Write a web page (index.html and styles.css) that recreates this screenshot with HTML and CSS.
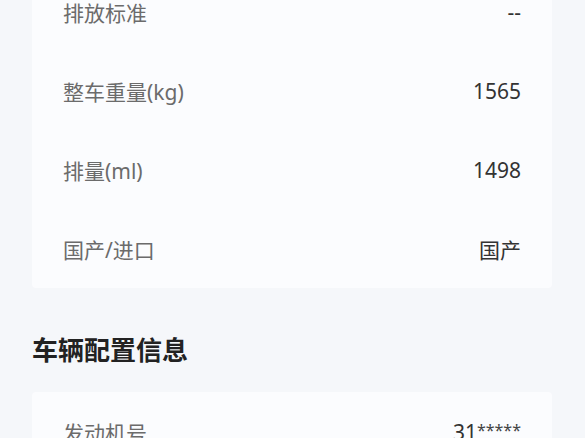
FILE: index.html
```html
<!DOCTYPE html>
<html lang="zh-CN">
<head>
    <meta charset="UTF-8">
    <meta name="viewport" content="width=device-width, initial-scale=1.0">
    <title>车辆信息</title>
    <link rel="stylesheet" href="styles.css">
</head>
<body>
    <div class="page">
        <div class="card card-first">
            <div class="row">
                <span class="label">排放标准</span>
                <span class="value">--</span>
            </div>
            <div class="row">
                <span class="label">整车重量(kg)</span>
                <span class="value">1565</span>
            </div>
            <div class="row">
                <span class="label">排量(ml)</span>
                <span class="value">1498</span>
            </div>
            <div class="row">
                <span class="label">国产/进口</span>
                <span class="value">国产</span>
            </div>
        </div>

        <h2 class="section-title">车辆配置信息</h2>

        <div class="card">
            <div class="row">
                <span class="label">发动机号</span>
                <span class="value">31<span class="mask">*****</span></span>
            </div>
        </div>
    </div>
</body>
</html>
```

FILE: styles.css
```css
body {
    margin: 0;
    background-color: #f5f7fa;
    font-family: "Noto Sans", "Noto Sans CJK SC", sans-serif;
    overflow: hidden;
}

.page {
    padding: 0 33px 0 32px;
}

.card {
    background-color: #fbfcfe;
    border-radius: 4px;
}

.card-first {
    margin-top: -28px;
}

.row {
    display: flex;
    justify-content: space-between;
    align-items: center;
    height: 79px;
    padding: 0 31px;
}

.label {
    font-size: 21px;
    color: #6b6b6b;
}

.value {
    font-size: 21px;
    color: #333;
}

.mask {
    font-size: 16px;
    vertical-align: 4px;
    color: #444;
}

.section-title {
    margin: 0;
    padding: 44px 0 24px;
    font-size: 26px;
    line-height: 36px;
    font-weight: 700;
    color: #222;
}
```
